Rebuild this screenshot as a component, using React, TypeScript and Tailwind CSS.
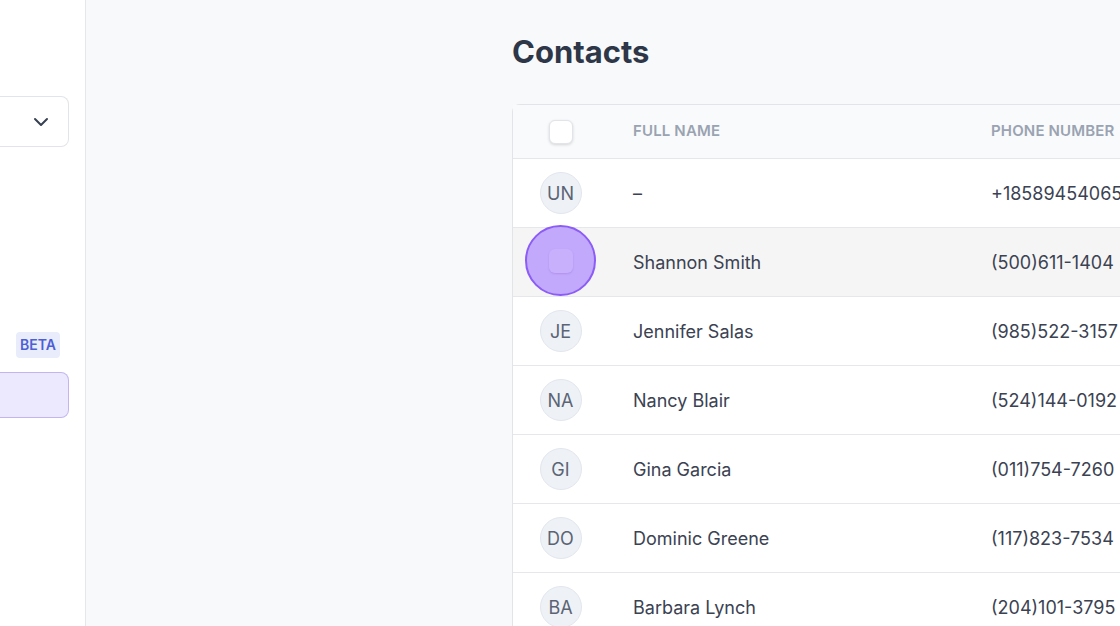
import { ChevronDown } from "lucide-react";

const contacts = [
  { initials: "UN", name: "–", phone: "+18589454065" },
  { initials: "SH", name: "Shannon Smith", phone: "(500)611-1404", hover: true },
  { initials: "JE", name: "Jennifer Salas", phone: "(985)522-3157" },
  { initials: "NA", name: "Nancy Blair", phone: "(524)144-0192" },
  { initials: "GI", name: "Gina Garcia", phone: "(011)754-7260" },
  { initials: "DO", name: "Dominic Greene", phone: "(117)823-7534" },
  { initials: "BA", name: "Barbara Lynch", phone: "(204)101-3795" },
];

export default function App() {
  return (
    <div className="flex h-[626px] w-[1120px] overflow-hidden bg-[#f8f9fb] font-['Inter',sans-serif]">
      {/* sidebar, cut off on the left */}
      <aside className="flex w-[86px] shrink-0 flex-col border-r border-[#e5e7eb] bg-white">
        <div className="mt-[96px] flex h-[51px] w-[69px] items-center justify-end rounded-r-lg border border-l-0 border-[#e2e4e9] pr-[15px] text-[#374151]">
          <ChevronDown size={24} strokeWidth={2} />
        </div>
        <div className="mt-[185px] flex justify-end pr-[25px]">
          <span className="rounded bg-[#e8ecfb] px-[4px] py-[3px] text-[14px] font-semibold leading-[20px] text-[#4d5fd6]">
            BETA
          </span>
        </div>
        <div className="mt-[14px] h-[46px] w-[69px] rounded-r-lg border border-l-0 border-[#c3b6f0] bg-[#ece8fd]" />
      </aside>

      <main className="flex-1 pl-[426px]">
        <h1 className="mt-[32px] text-[31px] font-bold leading-[40px] text-[#2d3748]">Contacts</h1>

        <div className="mt-[32px] w-[700px] rounded-tl-lg border-l border-t border-[#e2e4e9] bg-white">
          <div className="flex h-[53px] items-center bg-[#f9fafb]">
            <div className="flex w-[95px] justify-center">
              <div className="h-[24px] w-[24px] rounded-md border border-[#e2e4e9] bg-white shadow-[0_1px_3px_rgba(0,0,0,0.15)]" />
            </div>
            <div className="w-[358px] pl-[25px] text-[15px] font-semibold tracking-[0.01em] text-[#9aa3b2]">FULL NAME</div>
            <div className="pl-[25px] text-[15px] font-semibold tracking-[0.01em] text-[#9aa3b2]">PHONE NUMBER</div>
          </div>

          {contacts.map((c) => (
            <div
              key={c.initials}
              className={`flex h-[69px] items-center border-t border-[#e5e7eb] ${c.hover ? "bg-[#f5f5f5]" : "bg-white"}`}
            >
              <div className="flex w-[95px] justify-center">
                {c.hover ? (
                  <div className="-mt-[3px] flex h-[71px] w-[71px] items-center justify-center rounded-full border-2 border-[#8b5cf6] bg-[#c3a9fc]">
                    <div className="h-[24px] w-[24px] rounded-md bg-[#c8b0fd] shadow-[0_1px_2px_rgba(120,80,200,0.25)]" />
                  </div>
                ) : (
                  <div className="flex h-[42px] w-[42px] items-center justify-center rounded-full border border-[#e2e6ee] bg-[#eef2f7] text-[18px] text-[#5b6474]">
                    {c.initials}
                  </div>
                )}
              </div>
              <div className="w-[358px] pl-[25px] text-[18px] text-[#3b4252]">{c.name}</div>
              <div className="whitespace-nowrap pl-[25px] text-[18px] text-[#3b4252]">{c.phone}</div>
            </div>
          ))}
        </div>
      </main>
    </div>
  );
}
